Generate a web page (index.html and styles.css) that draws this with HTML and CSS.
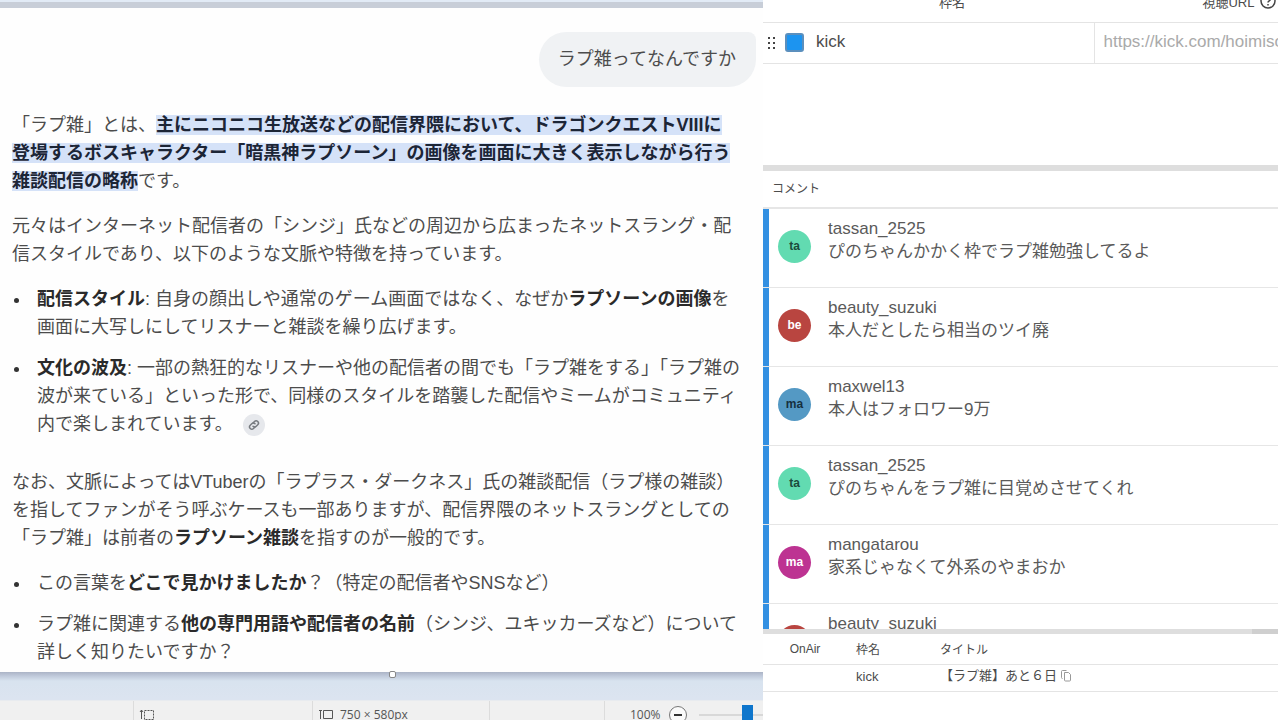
FILE: index.html
```
<!DOCTYPE html>
<html lang="ja">
<head>
  <meta charset="UTF-8">
  <title>ラプ雑</title>
  <link rel="stylesheet" href="styles.css">
</head>
<body>

  <div class="screen">

    <!-- Editor with the chat capture -->
    <div class="editor">
      <div class="edge-top"></div>

      <main class="chat">
        <div class="question">ラプ雑ってなんですか</div>

        <div class="answer">
          <p>「ラプ雑」とは、<mark>主にニコニコ生放送などの配信界隈において、ドラゴンクエストVIIIに<br>登場するボスキャラクター「暗黒神ラプソーン」の画像を画面に大きく表示しながら行う<br>雑談配信の略称</mark>です。</p>
          <p>元々はインターネット配信者の「シンジ」氏などの周辺から広まったネットスラング・配<br>信スタイルであり、以下のような文脈や特徴を持っています。</p>
          <ul>
            <li><b>配信スタイル</b>: 自身の顔出しや通常のゲーム画面ではなく、なぜか<b>ラプソーンの画像</b>を<br>画面に大写しにしてリスナーと雑談を繰り広げます。</li>
            <li><b>文化の波及</b>: 一部の熱狂的なリスナーや他の配信者の間でも「ラプ雑をする」「ラプ雑の<br>波が来ている」といった形で、同様のスタイルを踏襲した配信やミームがコミュニティ<br>内で楽しまれています。<button class="source" aria-label="リンク"><svg width="12" height="12" viewBox="0 0 24 24" fill="none" stroke="#777b80" stroke-width="3" stroke-linecap="round"><path d="M10 8l3-3a4.500 4.500 0 0 1 6.500 6.500l-3 3a4.500 4.500 0 0 1-6.500 0"/><path d="M14 16l-3 3a4.500 4.500 0 0 1-6.500-6.500l3-3a4.500 4.500 0 0 1 6.500 0"/></svg></button></li>
          </ul>
          <p class="note">なお、文脈によってはVTuberの「ラプラス・ダークネス」氏の雑談配信（ラプ様の雑談）<br>を指してファンがそう呼ぶケースも一部ありますが、配信界隈のネットスラングとしての<br>「ラプ雑」は前者の<b>ラプソーン雑談</b>を指すのが一般的です。</p>
          <ul>
            <li>この言葉を<b>どこで見かけましたか</b>？（特定の配信者やSNSなど）</li>
            <li>ラプ雑に関連する<b>他の専門用語や配信者の名前</b>（シンジ、ユキッカーズなど）について<br>詳しく知りたいですか？</li>
          </ul>
        </div>
      </main>

      <div class="edge-bottom"><span class="handle"></span></div>

      <footer class="status">
        <div class="cell"></div>
        <div class="cell">
          <svg width="16" height="14" viewBox="0 0 16 14" fill="none" stroke="#555"><path d="M2.500 11V2M1 4l1.500-2L4 4"/><rect x="5.500" y="2.500" width="9" height="9" stroke-dasharray="2 1"/></svg>
        </div>
        <div class="cell">
          <svg width="16" height="14" viewBox="0 0 16 14" fill="none" stroke="#555"><path d="M2.500 11V2M1 2.500h3"/><path d="M5.500 2.500h9v8h-9zM12 12.500h3"/></svg>
          <span>750 × 580px</span>
        </div>
        <div class="cell"></div>
        <div class="cell cell-zoom">
          <span>100%</span>
          <button class="zoom-out" aria-label="縮小"><svg width="20" height="20" viewBox="0 0 20 20" fill="#fafafa" stroke="#777"><circle cx="10" cy="10" r="8.500"/><path d="M6 10h8" stroke="#333" stroke-width="2"/></svg></button>
          <input type="range" class="zoom-range" aria-label="ズーム" min="0" max="100" value="82">
        </div>
      </footer>
    </div>

    <!-- Comment viewer -->
    <div class="viewer">
      <section class="frames">
        <table class="frame-table">
          <colgroup><col class="col-grip"><col class="col-name"><col class="col-url"></colgroup>
          <thead>
            <tr>
              <th></th>
              <th>枠名</th>
              <th><span class="with-help">視聴URL <svg width="16" height="16" viewBox="0 0 16 16" fill="none" stroke="#444" stroke-width="1.500"><circle cx="8" cy="8" r="7"/><path d="M5.500 6.500c0-3.500 5-3.300 5-.5 0 1.800-2.500 1.800-2.500 3.500M8 11v1.500"/></svg></span></th>
            </tr>
          </thead>
          <tbody>
            <tr>
              <td>
                <div class="grip-cell">
                  <svg width="9" height="12" viewBox="0 0 9 12" fill="#444"><path d="M0 0h2v2H0zM5 0h2v2H5zM0 5h2v2H0zM5 5h2v2H5zM0 10h2v2H0zM5 10h2v2H5z"/></svg>
                  <button class="swatch" aria-label="色"></button>
                </div>
              </td>
              <td><input class="field" type="text" value="kick" aria-label="枠名"></td>
              <td><input class="field field-url" type="text" placeholder="https://kick.com/hoimiso" aria-label="視聴URL"></td>
            </tr>
          </tbody>
        </table>
      </section>

      <div class="splitter"></div>

      <section class="comments">
        <h2>コメント</h2>
        <ul class="comment-list">
          <li>
            <span class="avatar green">ta</span>
            <div><div class="user">tassan_2525</div><div class="text">ぴのちゃんかかく枠でラプ雑勉強してるよ</div></div>
          </li>
          <li>
            <span class="avatar red">be</span>
            <div><div class="user">beauty_suzuki</div><div class="text">本人だとしたら相当のツイ廃</div></div>
          </li>
          <li>
            <span class="avatar blue">ma</span>
            <div><div class="user">maxwel13</div><div class="text">本人はフォロワー9万</div></div>
          </li>
          <li>
            <span class="avatar green">ta</span>
            <div><div class="user">tassan_2525</div><div class="text">ぴのちゃんをラプ雑に目覚めさせてくれ</div></div>
          </li>
          <li>
            <span class="avatar pink">ma</span>
            <div><div class="user">mangatarou</div><div class="text">家系じゃなくて外系のやまおか</div></div>
          </li>
          <li>
            <span class="avatar red"></span>
            <div><div class="user">beauty_suzuki</div></div>
          </li>
        </ul>
      </section>

      <div class="splitter splitter-low"></div>

      <section class="onair">
        <table class="onair-table">
          <colgroup><col class="col-onair"><col class="col-frame"><col></colgroup>
          <thead>
            <tr><th>OnAir</th><th>枠名</th><th>タイトル</th></tr>
          </thead>
          <tbody>
            <tr>
              <td></td>
              <td>kick</td>
              <td>
                <div class="title-cell">【ラプ雑】あと６日
                  <button class="copy" aria-label="コピー"><svg width="10" height="12" viewBox="0 0 10 12" fill="none" stroke="#999"><path d="M3.500 2.500h4l2 2v5.500q0 1-1 1h-4q-1 0-1-1z"/><path d="M1.500 8.500q-1 0-1-1v-6q0-1 1-1h4"/></svg></button>
                </div>
              </td>
            </tr>
          </tbody>
        </table>
      </section>
    </div>

  </div>

</body>
</html>
```
FILE: styles.css
```
* {
  box-sizing: border-box;
}

body {
  margin: 0;
  font-family: "Liberation Sans", "Noto Sans CJK JP", sans-serif;
  color: #4c4c4c;
  background: #fff;
}

button {
  padding: 0;
  border: none;
  background: none;
  cursor: pointer;
}

ul {
  margin: 0;
  padding: 0;
  list-style: none;
}

svg {
  display: block;
  flex: none;
}

.screen {
  display: grid;
  grid-template-columns: 763fr 515fr;
  height: 100vh;
  overflow: hidden;
}

/* Editor */
.editor {
  display: flex;
  flex-direction: column;
  min-width: 0;
  height: 100vh;
}

.edge-top {
  flex: none;
  height: 8px;
  border-top: 2px solid #e2ebf6;
  background: #c8ced8;
}

.chat {
  flex: 1;
  min-height: 0;
  padding: 24px 7px 0 12px;
  overflow: hidden;
  display: flex;
  flex-direction: column;
  background: #fefefe;
}

.question {
  align-self: flex-end;
  padding: 13px 20px 14px 19px;
  border-radius: 28px 8px 28px 28px;
  background: #f0f2f4;
  font-size: 18px;
  line-height: 28px;
}

.answer {
  margin-top: 24px;
  font-size: 18px;
  line-height: 28px;
  white-space: nowrap;
}

.answer p {
  margin: 0 0 17px;
}

.answer mark {
  padding: 0;
  background: #d5e2f8;
  color: #1c2536;
  font-weight: bold;
}

.answer b {
  color: #2a2a2a;
}

.answer li {
  position: relative;
  margin-bottom: 13px;
  padding-left: 25px;
}

.answer li::before {
  content: "";
  position: absolute;
  left: 2px;
  top: 13px;
  width: 5px;
  height: 5px;
  border-radius: 50%;
  background: #333;
}

.answer .note {
  margin-top: 30px;
}

.source {
  display: inline-flex;
  justify-content: center;
  align-items: center;
  width: 22px;
  height: 22px;
  margin-left: 10px;
  border-radius: 50%;
  background: #e6e8ec;
  vertical-align: middle;
}

.edge-bottom {
  position: relative;
  flex: none;
  height: 28px;
  background: linear-gradient(#abb4c6 0, #c0cadb 4px, #d8e3ef 9px, #dce4f0 100%);
}

.handle {
  position: absolute;
  left: 51%;
  top: -1px;
  width: 7px;
  height: 7px;
  border: 1px solid #888;
  border-radius: 2px;
  background: #fff;
}

.status {
  flex: none;
  display: grid;
  grid-template-columns: 134fr 179fr 177fr 115fr 158fr;
  height: 20px;
  overflow: hidden;
  border-top: 1px solid #e8ebef;
  background: #f0f0f0;
  font-family: "Open Sans", sans-serif;
  font-size: 12px;
  color: #555;
}

.cell {
  display: flex;
  align-items: center;
  gap: 6px;
  min-width: 0;
  height: 27px;
  padding-left: 5px;
  border-right: 1px solid #dcdcdc;
}

.cell-zoom {
  gap: 7px;
  padding-left: 25px;
  border-right: none;
}

.zoom-range {
  appearance: none;
  flex: 1;
  min-width: 0;
  height: 20px;
  margin: 0 0 0 4px;
  background: linear-gradient(#d8d8d8, #d8d8d8) center / 100% 2px no-repeat;
}

.zoom-range::-webkit-slider-thumb {
  appearance: none;
  width: 11px;
  height: 20px;
  background: #0f76cc;
}

/* Viewer */
.viewer {
  display: flex;
  flex-direction: column;
  min-width: 0;
  height: 100vh;
}

.frames {
  flex: none;
  height: 165px;
  overflow: hidden;
}

.frame-table {
  table-layout: fixed;
  width: 621px;
  margin-top: -19px;
  border-collapse: collapse;
}

.col-grip {
  width: 47px;
}

.col-name {
  width: 284px;
}

.col-url {
  width: 290px;
}

.frame-table th {
  height: 41px;
  padding: 0;
  border-bottom: 1px solid #e4e4e4;
  font-size: 13px;
  font-weight: normal;
}

.frame-table td {
  height: 41px;
  padding: 0;
  border-bottom: 1px solid #e4e4e4;
}

.frame-table td + td + td {
  border-left: 1px solid #e4e4e4;
}

.with-help {
  display: flex;
  justify-content: center;
  align-items: center;
  gap: 5px;
}

.grip-cell {
  display: flex;
  align-items: center;
  gap: 8px;
  padding-left: 5px;
}

.swatch {
  width: 19px;
  height: 19px;
  border: 2px solid #5b8fbd;
  border-radius: 3px;
  background: #1c94f0;
}

.field {
  width: 100%;
  padding: 0 6px 2px;
  border: none;
  outline: none;
  background: none;
  font: inherit;
  font-size: 17px;
  color: #4c4c4c;
}

.field-url {
  padding-left: 9px;
}

.field-url::placeholder {
  color: #aaa;
}

.splitter {
  flex: none;
  height: 6px;
  background: #dedede;
}

.comments {
  flex: 1;
  min-height: 0;
  overflow: hidden;
}

.comments h2 {
  margin: 0;
  padding-left: 9px;
  border-bottom: 2px solid #e6e6e6;
  font-size: 12px;
  font-weight: normal;
  line-height: 36px;
}

.comment-list li {
  display: flex;
  gap: 17px;
  height: 79px;
  padding: 8px 0 0 9px;
  border-bottom: 1px solid #e6e6e6;
  background: linear-gradient(#3390e2, #3390e2) left / 6px 100% no-repeat;
  padding-left: 15px;
}

.avatar {
  flex: none;
  width: 33px;
  height: 33px;
  margin-top: 13px;
  border-radius: 50%;
  font-size: 12px;
  font-weight: bold;
  line-height: 33px;
  text-align: center;
}

.green {
  background: #62dbb1;
  color: #1c4a3c;
}

.red {
  background: #b94540;
  color: #fff;
}

.blue {
  background: #5499c4;
  color: #16303f;
}

.pink {
  background: #bd3392;
  color: #fff;
}

.user,
.text {
  font-size: 17px;
  line-height: 23px;
  color: #5a5a5a;
}

.splitter-low {
  height: 5px;
  background: linear-gradient(90deg, #dedede 95%, #cfcfcf 95%);
}

.onair {
  flex: none;
  height: 86px;
}

.onair-table {
  table-layout: fixed;
  width: 100%;
  border-collapse: collapse;
}

.col-onair {
  width: 84px;
}

.col-frame {
  width: 84px;
}

.onair-table th,
.onair-table td {
  padding: 0 0 0 9px;
  border-bottom: 1px solid #e4e4e4;
  text-align: left;
}

.onair-table th {
  height: 30px;
  font-size: 12px;
  font-weight: normal;
}

.onair-table th:first-child {
  padding: 0;
  text-align: center;
}

.onair-table td {
  height: 27px;
  padding-bottom: 3px;
  font-size: 13px;
}

.title-cell {
  display: flex;
  align-items: center;
  gap: 4px;
  line-height: 20px;
}
```
